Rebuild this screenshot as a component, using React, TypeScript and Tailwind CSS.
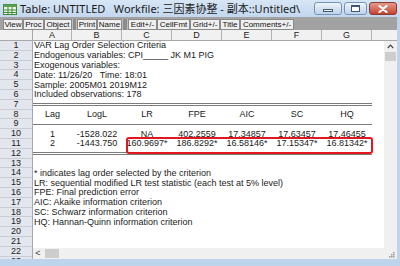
import React from "react";

type Row = { text?: string; cells?: string[]; line?: "single" | "double" };

const rows: Row[] = [
  { text: "VAR Lag Order Selection Criteria" },
  { text: "Endogenous variables: CPI_____ JK M1 PIG" },
  { text: "Exogenous variables:" },
  { text: "Date: 11/26/20   Time: 18:01" },
  { text: "Sample: 2005M01 2019M12" },
  { text: "Included observations: 178" },
  { line: "double" },
  { cells: ["Lag", "LogL", "LR", "FPE", "AIC", "SC", "HQ"] },
  { line: "single" },
  { cells: ["1", "-1528.022", "NA", "402.2559", "17.34857", "17.63457", "17.46455"] },
  { cells: ["2", "-1443.750", "160.9697*", "186.8292*", "16.58146*", "17.15347*", "16.81342*"] },
  { line: "double" },
  {},
  { text: "* indicates lag order selected by the criterion" },
  { text: "LR: sequential modified LR test statistic (each test at 5% level)" },
  { text: "FPE: Final prediction error" },
  { text: "AIC: Akaike information criterion" },
  { text: "SC: Schwarz information criterion" },
  { text: "HQ: Hannan-Quinn information criterion" },
  {},
  {},
  {},
  {},
];

const colW = ["w-[39px]", "w-[50px]", "w-[50px]", "w-[50px]", "w-[50px]", "w-[50px]", "w-[50px]"];
const colL = ["A", "B", "C", "D", "E", "F", "G"];

function TableIcon() {
  return (
    <svg width="14" height="11" viewBox="0 0 14 11">
      <rect x="0.5" y="0.5" width="13" height="10" fill="#eef7e6" stroke="#3d8a3a" />
      <rect x="0.5" y="0.5" width="13" height="2.5" fill="#5aa04f" />
      <line x1="5" y1="3" x2="5" y2="10.5" stroke="#3d8a3a" />
      <line x1="9" y1="3" x2="9" y2="10.5" stroke="#3d8a3a" />
      <line x1="0.5" y1="6" x2="13.5" y2="6" stroke="#3d8a3a" />
      <line x1="0.5" y1="8.5" x2="13.5" y2="8.5" stroke="#3d8a3a" />
    </svg>
  );
}

function TBtn({ label, w }: { label: string; w: string }) {
  return (
    <div
      className={`${w} h-[11px] flex items-center justify-center bg-[#efefef] border border-[#8a8a8a] text-[8px] leading-none text-[#111] whitespace-nowrap`}
    >
      {label}
    </div>
  );
}

export default function App() {
  return (
    <div className="w-[400px] h-[266px] overflow-hidden flex flex-col bg-[#bed3ec] font-['Liberation_Sans',Arial,sans-serif]">
      {/* Title bar */}
      <div className="h-[17px] flex items-start bg-gradient-to-b from-[#d7e6f6] to-[#c3d7ee]">
        <div className="ml-[3px] mt-[4px]">
          <TableIcon />
        </div>
        <div className="ml-[3px] mt-[2px] text-[11px] leading-[13px] text-[#1a1a1a] whitespace-pre font-['Noto_Sans','Noto_Sans_CJK_SC',sans-serif]">
          {"Table: UNTITLED   Workfile: 三因素协整 - 副本::Untitled\\"}
        </div>
        <div className="ml-auto mr-[3px] mt-[2px] flex gap-[2px]">
          <div className="w-[28px] h-[13px] rounded-[3px] border border-[#7893b8] bg-gradient-to-b from-[#eef4fb] to-[#bfd2ea] flex items-center justify-center">
            <div className="w-[10px] h-[3px] mt-[3px] bg-white border border-[#3f546e]" />
          </div>
          <div className="w-[23px] h-[13px] rounded-[3px] border border-[#7893b8] bg-gradient-to-b from-[#eef4fb] to-[#bfd2ea] flex items-center justify-center">
            <div className="w-[9px] h-[7px] border border-[#3f546e] border-t-2 bg-white" />
          </div>
          <div className="w-[28px] h-[13px] rounded-[3px] border border-[#8a3a30] bg-gradient-to-b from-[#e59a8a] to-[#c53f2e] flex items-center justify-center">
            <svg width="10" height="8" viewBox="0 0 10 8">
              <path d="M1.5 1 L8.5 7 M8.5 1 L1.5 7" stroke="#fff" strokeWidth="2.2" strokeLinecap="round" />
            </svg>
          </div>
        </div>
      </div>

      {/* Toolbar */}
      <div className="h-[13px] mr-[3px] pt-[2px] flex bg-[#a2a2a2]">
        <div className="w-[3px]" />
        <TBtn label="View" w="w-[20px]" />
        <TBtn label="Proc" w="w-[21px]" />
        <TBtn label="Object" w="w-[28px]" />
        <div className="w-[5px] h-[11px] bg-[#8c8c8c] border-x border-[#bdbdbd]" />
        <TBtn label="Print" w="w-[20px]" />
        <TBtn label="Name" w="w-[25px]" />
        <div className="w-[6px] h-[11px] bg-[#8c8c8c] border-x border-[#bdbdbd]" />
        <TBtn label="Edit+/-" w="w-[29px]" />
        <TBtn label="CellFmt" w="w-[33px]" />
        <TBtn label="Grid+/-" w="w-[30px]" />
        <TBtn label="Title" w="w-[20px]" />
        <TBtn label="Comments+/-" w="w-[54px]" />
      </div>

      {/* Column header */}
      <div className="h-[11px] mr-[3px] flex bg-[#f1f1f1] border-b border-[#a8a8a8] text-[9px] leading-[10px] text-[#222]">
        <div className="w-[33px] border-r border-[#a8a8a8]" />
        {colL.map((c, i) => (
          <div key={c} className={`${colW[i]} border-r border-[#b4b4b4] text-center`}>
            {c}
          </div>
        ))}
        <div className="flex-1" />
      </div>

      {/* Body */}
      <div className="h-[218px] mr-[3px] flex bg-white">
        {/* row header */}
        <div className="w-[33px] flex flex-col overflow-hidden bg-[#e3e6ed] border-r border-[#a3a8b2]">
          {rows.map((_, i) => (
            <div
              key={i}
              className="h-[9.8px] shrink-0 border-b border-[#c9ccd4] text-[9px] leading-[9px] text-center text-[#222]"
            >
              {i + 1}
            </div>
          ))}
        </div>

        {/* cells */}
        <div className="flex-1 flex flex-col min-w-0">
          <div className="flex-1 relative overflow-hidden">
            {rows.map((r, i) => (
              <div key={i} className="h-[9.8px] flex items-center text-[9px] leading-none text-[#1a1a1a]">
                {r.text !== undefined && <div className="pl-[1px] whitespace-pre">{r.text}</div>}
                {r.cells &&
                  r.cells.map((c, j) => (
                    <div key={j} className={`${colW[j]} text-center whitespace-pre`}>
                      {c}
                    </div>
                  ))}
                {r.line === "double" && (
                  <div className="w-[339px] h-[3px] border-y border-[#7c7c7c]" />
                )}
                {r.line === "single" && <div className="w-[339px] h-0 border-t border-[#7c7c7c]" />}
              </div>
            ))}
            <div className="absolute left-[93px] top-[96px] w-[247px] h-[17px] border-2 border-[#e3161d] rounded-[3px]" />
          </div>
          <div className="h-[11px] bg-[#f0f0f0] flex items-center">
            <div className="w-[10px] text-[9px] leading-none text-[#444] text-center">&lt;</div>
            <div className="ml-[2px] w-[14px] h-[9px] bg-[#cdcdcd]" />
          </div>
        </div>

        {/* vertical scrollbar */}
        <div className="w-[13px] bg-[#f0f0f0] flex flex-col items-center">
          <svg className="mt-[3px]" width="7" height="5" viewBox="0 0 7 5">
            <path d="M0.8 4 L3.5 1.2 L6.2 4" stroke="#444" strokeWidth="1.2" fill="none" />
          </svg>
          <div className="mt-[3px] w-[11px] h-[9px] bg-[#cdcdcd]" />
          <div className="flex-1" />
          <svg className="mb-[1px] ml-[3px]" width="6" height="6" viewBox="0 0 6 6">
            <rect x="4" y="0" width="1.5" height="1.5" fill="#9a9a9a" />
            <rect x="2" y="2" width="1.5" height="1.5" fill="#9a9a9a" />
            <rect x="4" y="2" width="1.5" height="1.5" fill="#9a9a9a" />
            <rect x="0" y="4" width="1.5" height="1.5" fill="#9a9a9a" />
            <rect x="2" y="4" width="1.5" height="1.5" fill="#9a9a9a" />
            <rect x="4" y="4" width="1.5" height="1.5" fill="#9a9a9a" />
          </svg>
        </div>
      </div>
      <div className="flex-1" />
    </div>
  );
}
